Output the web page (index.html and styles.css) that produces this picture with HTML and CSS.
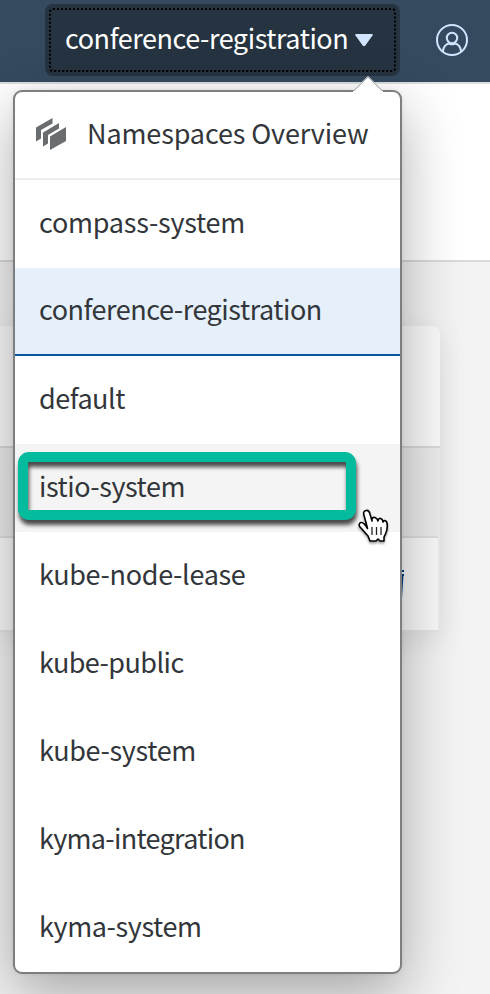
FILE: index.html
```html
<!DOCTYPE html>
<html lang="en">
<head>
<meta charset="utf-8">
<title>Namespaces</title>
<link rel="stylesheet" href="styles.css">
</head>
<body>
<div class="app">
  <header class="shellbar">
    <button class="switcher"><span class="switcher-label">conference-registration</span>
      <svg class="caret" width="18" height="13" viewBox="0 0 18 13"><path d="M1 0H17Q18.500 0 17.500 1.500L10.300 11.500Q9 13 7.700 11.500L.5 1.500Q-.5 0 1 0Z" fill="#d1e5ff"/></svg>
    </button>
    <svg class="user" width="34" height="34" viewBox="0 0 34 34" fill="none" stroke="#d1e5ff" stroke-width="2"><circle cx="17" cy="17" r="15"/><circle cx="17" cy="15" r="5.200"/><path d="M8 29V28Q9 21.500 14 20.500M20 20.500Q25 21.500 26 28V29M14 20.500Q17 22 20 20.500"/></svg>
  </header>
  <section class="page-head"></section>
  <main class="content">
    <div class="panel">
      <div class="panel-head"></div>
      <div class="table-head"></div>
      <div class="table-row"><svg width="38" height="30" viewBox="0 0 38 30" fill="none" stroke="#003e87" stroke-width="2"><path d="M8 1H38M8 5H38"/><path d="M35.500 5L34 28H12L8 5" stroke-width="4"/></svg></div>
    </div>
  </main>
  <nav class="popover">
    <svg class="arrow" width="30" height="16" viewBox="0 0 30 16"><path d="M0 14.500L15 0L30 14.500V16H0Z" fill="#fff"/><path d="M0 14.500H1L15 .8L29 14.500H30" fill="none" stroke="#82888d" stroke-width="1"/></svg>
    <div class="overview">
      <svg width="32" height="34" viewBox="0 0 32 34" fill="#6a6d70"><path d="M1 9.500L17.500 0V5.500L6 12V20.500L1 23.500Z"/><path d="M8 14.500L24 5V10.500L13 17V25.500L8 28.500Z"/><path d="M15 18.500L31 9V23L15 32Z"/></svg>
      <span class="overview-label">Namespaces Overview</span>
    </div>
    <ul class="list">
      <li><span class="compass">compass-system</span></li>
      <li class="selected"><span class="conference">conference-registration</span></li>
      <li><span class="default">default</span></li>
      <li class="hover"><span class="istio">istio-system</span><div class="marker"></div></li>
      <li><span class="node-lease">kube-node-lease</span></li>
      <li><span class="public">kube-public</span></li>
      <li><span class="kube-system">kube-system</span></li>
      <li><span class="integration">kyma-integration</span></li>
      <li><span class="kyma-system">kyma-system</span></li>
    </ul>
  </nav>
  <svg class="cursor" width="32" height="35" viewBox="0 0 32 35"><path d="M9.500 19.500L6.500 8C5 4 5.500 2 8 1.500C10.500 1 11.500 3 12 5L14 12C13.500 9 15 8 17 8.500C18.500 9 19.500 10 20 12C20 9 22.500 8.500 24.500 11L25 13C25.500 11 28.500 11 29 14C30 20 29 22 27.500 25L26 28V32H22L20 30L18 32H12L10 27L3 19C.5 17 .5 14 3 13.500C5.500 13 7.500 16 9.500 19.500Z" fill="#fff" stroke="#000" stroke-width="1.600" stroke-linejoin="round"/><path d="M14 18V26M18.500 18V26M23 18V26" stroke="#222" stroke-width="1.300"/></svg>
</div>
</body>
</html>
```
FILE: styles.css
```css
* { box-sizing: border-box; }
body { margin: 0; }
.app {
  position: relative;
  width: 490px;
  height: 994px;
  overflow: hidden;
  background: #f3f3f3;
  color: #32363a;
  font: 27px/40px "Noto Sans CJK SC", "Noto Sans", sans-serif;
}
.shellbar {
  height: 82px;
  padding: 4px 21px 0 45px;
  display: flex;
  align-items: flex-start;
  justify-content: space-between;
  background: #354a5f;
}
.switcher {
  height: 72px;
  width: 355px;
  padding: 0 27px 0 20px;
  display: flex;
  align-items: center;
  justify-content: space-between;
  border: 0;
  border-radius: 8px;
  background: #263340;
  color: #fff;
  font: inherit;
  white-space: nowrap;
  outline: 2px dotted #000;
  outline-offset: -6px;
}
.switcher-label { padding-bottom: 4px; letter-spacing: -.44px; }
.caret { flex: none; }
.user { margin-top: 19px; }
.page-head {
  height: 180px;
  border-top: 2px solid #dcdedf;
  border-bottom: 2px solid #d9dada;
  background: #fff;
}
.content { padding-top: 64px; }
.panel {
  width: 440px;
  height: 306px;
  border-top-right-radius: 10px;
  border-right: 2px solid #ededed;
  border-bottom: 2px solid #e5e5e5;
  background: #fafafa;
  box-shadow: 0 8px 30px rgba(0, 0, 0, .09);
}
.panel-head {
  width: 440px;
  height: 122px;
  border-top-right-radius: 8px;
  border-bottom: 2px solid #d9d9d9;
  background: #fafafa;
}
.table-head {
  height: 90px;
  border-top: 2px solid #ededed;
  border-bottom: 2px solid #dedede;
  background: #ececec;
}
.table-row {
  height: 92px;
  padding: 32px 34px 0 0;
  display: flex;
  justify-content: flex-end;
}
.popover {
  position: absolute;
  left: 13px;
  top: 90px;
  width: 389px;
  height: 884px;
  border: 2px solid #7d7e80;
  border-radius: 9px;
  background: #fff;
  box-shadow: 0 20px 60px rgba(0, 0, 0, .32), 0 0 4px rgba(0, 0, 0, .08);
}
.arrow { position: absolute; right: 17px; top: -16px; }
.overview {
  height: 88px;
  padding: 0 20px;
  display: flex;
  align-items: center;
  gap: 20px;
  border-bottom: 2px solid #ededed;
  white-space: nowrap;
}
.overview-label { padding-bottom: 4px; letter-spacing: -.13px; }
.list { margin: 0; padding: 0; list-style: none; }
.list li {
  position: relative;
  height: 88px;
  padding: 0 0 4px 24px;
  display: flex;
  align-items: center;
  white-space: nowrap;
}
.list .selected { background: #e5f0fa; border-bottom: 2px solid #0854a0; }
.list .hover { background: #f4f4f4; }
.compass { letter-spacing: -.24px; }
.conference { letter-spacing: -.46px; }
.default { letter-spacing: -.5px; }
.istio { letter-spacing: -.46px; }
.node-lease { letter-spacing: -.33px; }
.public { letter-spacing: -.57px; }
.kube-system { letter-spacing: -.34px; }
.integration { letter-spacing: -.7px; }
.kyma-system { letter-spacing: -.4px; }
.marker {
  position: absolute;
  left: 3px;
  top: 8px;
  width: 338px;
  height: 68px;
  border: 10px solid #04bb9e;
  border-radius: 11px;
  filter: drop-shadow(1px 5px 2px rgba(0, 0, 0, .7));
}
.cursor { position: absolute; left: 358px; top: 509px; filter: drop-shadow(0 2px 1px rgba(0, 0, 0, .35)); }
```
